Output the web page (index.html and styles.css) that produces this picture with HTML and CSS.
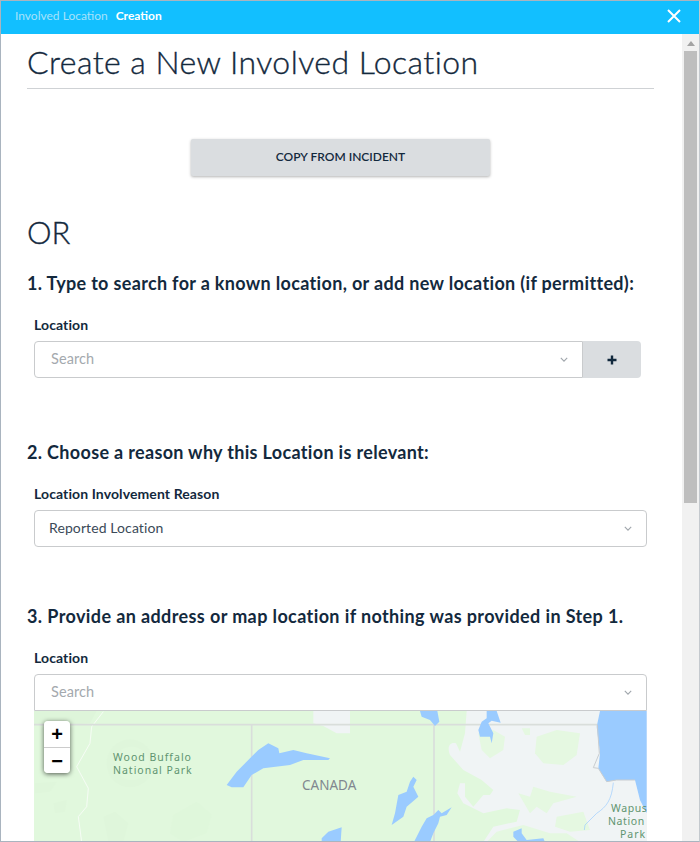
FILE: index.html
```html
<!DOCTYPE html>
<html lang="en">
<head>
<meta charset="utf-8">
<title>Create a New Involved Location</title>
<link rel="stylesheet" href="styles.css">
</head>
<body>
<div class="window">
  <header class="topbar">
    <div class="crumbs"><span class="crumb">Involved Location</span><span class="crumb-current">Creation</span></div>
    <svg class="close" viewBox="0 0 14 14" width="14" height="14"><path d="M1 1 13 13M13 1 1 13" stroke="#fff" stroke-width="2" fill="none"/></svg>
  </header>
  <div class="body">
    <main class="content">
      <h1 class="title">Create a New Involved Location</h1>
      <div class="copy-row"><button class="copy-btn">COPY FROM INCIDENT</button></div>
      <div class="or">OR</div>

      <h2 class="step step-1">1. Type to search for a known location, or add new location (if permitted):</h2>
      <div class="field">
        <label class="label">Location</label>
        <div class="input-group">
          <div class="select select-join">
            <span class="placeholder">Search</span>
            <svg class="chev" viewBox="0 0 10 6" width="8" height="5"><path d="M1 1 5 5 9 1" stroke="#a0a6ac" stroke-width="1.4" fill="none"/></svg>
          </div>
          <button class="plus-btn"><svg viewBox="0 0 10 10" width="10" height="10"><path d="M5 .5V9.5M.5 5H9.5" stroke="#10283c" stroke-width="2.4" fill="none"/></svg></button>
        </div>
      </div>

      <h2 class="step step-2">2. Choose a reason why this Location is relevant:</h2>
      <div class="field">
        <label class="label">Location Involvement Reason</label>
        <div class="select">
          <span class="value">Reported Location</span>
          <svg class="chev" viewBox="0 0 10 6" width="8" height="5"><path d="M1 1 5 5 9 1" stroke="#a0a6ac" stroke-width="1.4" fill="none"/></svg>
        </div>
      </div>

      <h2 class="step step-3">3. Provide an address or map location if nothing was provided in Step 1.</h2>
      <div class="field">
        <label class="label">Location</label>
        <div class="select select-map">
          <span class="placeholder">Search</span>
          <svg class="chev" viewBox="0 0 10 6" width="8" height="5"><path d="M1 1 5 5 9 1" stroke="#a0a6ac" stroke-width="1.4" fill="none"/></svg>
        </div>
        <div class="map">
          <svg class="map-art" viewBox="34 711 613 131" width="613" height="131">
            <rect x="34" y="711" width="613" height="131" fill="#f0f4f5"/>
            <g transform="translate(0 700) scale(.33333)">
              <rect x="102" y="33" width="948" height="393" fill="#e1f8dd"/>
              <path d="M102 33H290L270 70 200 74 102 74Z" fill="#def5da"/>
              <path d="M940 33H1050V100H1010L970 78 940 70Z" fill="#f0f4f5"/>
              <ellipse cx="390" cy="190" rx="70" ry="72" fill="#dff6db"/>
              <ellipse cx="395" cy="190" rx="52" ry="50" fill="#e1f8dd"/>
              <path d="M310 350 345 335 385 370 370 426H325Z" fill="#dff6db"/>
              <path d="M520 345 590 305 635 345 620 400 550 426 510 400Z" fill="#dff7db"/>
              <path d="M105 250 170 245 150 275 105 280ZM160 310 200 300 195 335 165 340Z" fill="#dff6db"/>
              <path d="M310 35 275 80 270 130 230 200 265 265 260 320 235 350 245 426" stroke="#f6fcf5" stroke-width="3" fill="none"/>
              <path d="M102 74H1050M755 74V426" stroke="#d9dedb" stroke-width="5" fill="none"/>
              <path d="M680 255 710 215 750 175 775 150 805 130 835 145 838 160 880 150 920 160 990 175 985 180 910 180 870 195 790 205 755 225 730 262 695 262Z" fill="#9acbff"/>
              <path d="M965 415 985 395 1025 382 1022 426H965Z" fill="#9acbff"/>
            </g>
            <g transform="translate(350 700) scale(.33333)">
              <path d="M0 33H350L345 100 330 155 318 130C300 125 290 140 300 165L340 210 395 240 430 270 420 285 400 285 370 320 345 290 345 250 330 250 322 280 340 310 400 340 470 325 510 330 500 365 430 380 400 426H0Z" fill="#e1f8dd"/>
              <path d="M385 100 430 90 465 110 460 150 420 175 395 150Z" fill="#e5f8e1"/>
              <path d="M560 110 620 90 690 100 680 165 640 195 580 190 555 160Z" fill="#e5f8e1"/>
              <path d="M515 85H540V105H525Z" fill="#e5f8e1"/>
              <path d="M505 280 540 290 550 260 600 275 680 290 610 310 590 340 560 320 540 340Z" fill="#e5f8e1"/>
              <path d="M620 350 700 335 720 390 660 395 615 380Z" fill="#e5f8e1"/>
              <path d="M410 426 440 395 520 375 600 400 650 400 690 426Z" fill="#e5f8e1"/>
              <path d="M0 74H742M252 74V426" stroke="#d9dedb" stroke-width="5" fill="none"/>
              <path d="M750 33H890V340L870 300 855 240 800 240 770 245 745 205 750 160 740 80Z" fill="#9acbff"/>
              <path d="M742 74 748 160 730 203 745 205 770 245 800 240 855 240" stroke="#c9cdd0" stroke-width="3" fill="none"/>
              <path d="M790 248C785 300 770 320 740 340L705 375 703 390" stroke="#9acbff" stroke-width="2" fill="none"/>
              <path d="M210 33H262L268 65 255 78 240 60 215 50Z" fill="#9acbff"/>
              <path d="M410 33H440L452 68 425 62 415 70 430 100 425 130 420 110 390 110 385 90 395 65 410 55Z" fill="#9acbff"/>
              <path d="M190 230 200 240 190 260 205 290 170 320 160 350 125 375 135 340 145 285 170 275 180 245Z" fill="#9acbff"/>
              <path d="M305 322 290 345 270 350 265 370 250 400 240 426H192L215 380 230 355 250 345 265 330 275 340Z" fill="#9acbff"/>
              <path d="M490 395 515 385 515 400 530 420 580 415 585 426H505L490 410Z" fill="#9acbff"/>
            </g>
            <text class="map-park" x="113" y="761">Wood Buffalo</text>
            <text class="map-park" x="113" y="774">National Park</text>
            <text class="map-country" x="302" y="789.5">CANADA</text>
            <text class="map-park map-edge" x="611" y="812">Wapus</text>
            <text class="map-park map-edge" x="608" y="825">Nation</text>
            <text class="map-park" x="620" y="838">Park</text>
          </svg>
          <div class="zoom">
            <button class="zoom-btn">+</button>
            <button class="zoom-btn">&minus;</button>
          </div>
        </div>
      </div>
    </main>
    <div class="scrollbar">
      <svg class="scroll-up" viewBox="0 0 8 5" width="8" height="5"><path d="M4 0 8 5H0Z" fill="#a3a3a3"/></svg>
      <div class="scroll-thumb"></div>
    </div>
  </div>
</div>
</body>
</html>
```

FILE: styles.css
```css
* { box-sizing: border-box; }
html, body { margin: 0; padding: 0; }
body { width: 700px; height: 842px; overflow: hidden; background: #fff; font-family: "Lato", "Open Sans", sans-serif; color: #13293d; }
.window { width: 700px; height: 842px; border: 1px solid #a9b4bf; border-right-color: #c4c9ce; display: flex; flex-direction: column; overflow: hidden; }
.topbar { flex: none; height: 33px; background: #12bfff; display: flex; align-items: center; justify-content: space-between; padding: 0 18px 0 14px; }
.crumbs { display: flex; gap: 8px; font-size: 12px; line-height: 30px; padding-bottom: 3px; }
.crumb { color: #a6e2fb; }
.crumb-current { color: #fff; font-weight: 700; }
.close { margin-bottom: 3px; }
.body { flex: 1; display: flex; min-height: 0; }
.content { flex: 1; min-width: 0; padding: 0 28px 0 26px; overflow: hidden; }
.title { margin: 0; height: 55px; border-bottom: 1px solid #cfd2d5; font-size: 32px; font-weight: 300; line-height: 56px; letter-spacing: .45px; -webkit-text-stroke: .35px #13293d; color: #13293d; }
.copy-row { display: flex; justify-content: center; padding-top: 50px; }
.copy-btn { width: 299px; height: 37px; border: 0; border-radius: 2px; background: #dadde0; box-shadow: 0 1px 3px rgba(0,0,0,.3); font: 600 12px "Lato", sans-serif; color: #13293d; padding: 0 0 2px; }
.or { margin-top: 38px; font-size: 31px; font-weight: 300; line-height: 36px; -webkit-text-stroke: .35px #13293d; color: #13293d; }
.step { margin: 0; font-size: 18px; font-weight: 700; line-height: 24px; letter-spacing: .33px; color: #13293d; white-space: nowrap; }
.step-1 { margin-top: 21px; }
.step-2 { margin-top: 62px; }
.step-3 { margin-top: 57px; letter-spacing: .39px; }
.field { padding-left: 7px; margin-top: 21px; }
.label { display: block; font-size: 14px; font-weight: 700; line-height: 18px; margin-bottom: 7px; letter-spacing: .1px; color: #13293d; }
.input-group { display: flex; width: 607px; }
.select { width: 613px; height: 37px; border: 1px solid #c9cbcd; border-radius: 4px; background: #fff; display: flex; align-items: center; justify-content: space-between; padding: 0 14px 2px 14px; font-size: 14px; letter-spacing: .1px; }
.select-join { flex: 1; width: auto; padding-left: 16px; border-radius: 4px 0 0 4px; }
.select-map { border-radius: 4px 4px 0 0; padding-left: 16px; }
.placeholder { color: #a4a9ae; font-size: 14.5px; }
.value { color: #3b4a58; }
.chev { flex: none; margin-top: 2px; }
.plus-btn { flex: none; width: 58px; height: 37px; border: 0; border-radius: 0 4px 4px 0; background: #dadde0; display: flex; align-items: center; justify-content: center; padding: 0; }
.map { position: relative; width: 613px; height: 131px; overflow: hidden; }
.map-art { display: block; }
.map-park { font: 10.5px "Noto Sans", sans-serif; letter-spacing: 1px; fill: #5f9470; }
.map-edge { letter-spacing: .6px; }
.map-country { font: 13.5px "Noto Sans", sans-serif; fill: #80878f; }
.zoom { position: absolute; left: 10px; top: 10px; width: 26px; border-radius: 4px; overflow: hidden; box-shadow: 0 1px 5px rgba(0,0,0,.65); display: flex; flex-direction: column; }
.zoom-btn { width: 26px; height: 26px; padding: 0; border: 0; background: #fff; font: 700 20px/26px "Liberation Sans", sans-serif; color: #000; }
.zoom-btn + .zoom-btn { border-top: 1px solid #ccc; }
.scrollbar { flex: none; width: 17px; background: #f1f1f1; display: flex; flex-direction: column; align-items: center; }
.scroll-up { margin-top: 7px; }
.scroll-thumb { width: 13px; height: 452px; margin-top: 5px; background: #bebebe; }
```
